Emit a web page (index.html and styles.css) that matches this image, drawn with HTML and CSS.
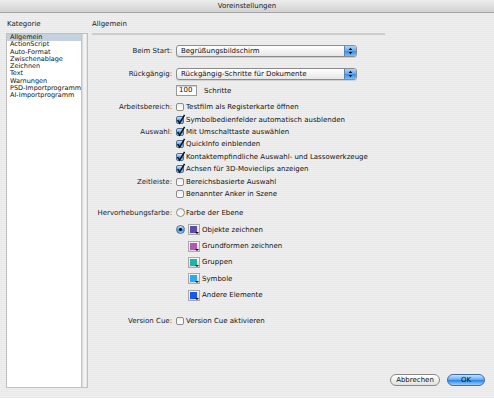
FILE: index.html
```html
<!DOCTYPE html>
<html lang="de">
<head>
  <meta charset="UTF-8">
  <title>Voreinstellungen</title>
  <link rel="stylesheet" href="styles.css">
</head>
<body>
  <div class="window">
    <div class="titlebar">Voreinstellungen</div>

    <div class="main">
      <!-- Kategorien -->
      <div class="sidebar">
        <div class="heading side-heading">Kategorie</div>
        <div class="listbox">
          <ul class="list">
            <li class="selected">Allgemein</li>
            <li>ActionScript</li>
            <li>Auto-Format</li>
            <li>Zwischenablage</li>
            <li>Zeichnen</li>
            <li>Text</li>
            <li>Warnungen</li>
            <li>PSD-Importprogramm</li>
            <li>AI-Importprogramm</li>
          </ul>
          <div class="scrollbar"></div>
        </div>
      </div>

      <!-- Allgemein -->
      <div class="content">
        <div class="heading">Allgemein</div>
        <div class="rule"></div>

        <div class="row popup-row first">
          <span class="label">Beim Start:</span>
          <div class="popup">
            <span class="popup-text">Begrüßungsbildschirm</span>
            <span class="popup-arrows">
              <svg viewBox="0 0 11 12" width="11" height="12"><path d="M5.5 2.8 L7.3 5 L3.7 5 Z M5.5 9.2 L7.3 7 L3.7 7 Z" fill="#111"/></svg>
            </span>
          </div>
        </div>

        <div class="row popup-row second">
          <span class="label">Rückgängig:</span>
          <div class="popup">
            <span class="popup-text">Rückgängig-Schritte für Dokumente</span>
            <span class="popup-arrows">
              <svg viewBox="0 0 11 12" width="11" height="12"><path d="M5.5 2.8 L7.3 5 L3.7 5 Z M5.5 9.2 L7.3 7 L3.7 7 Z" fill="#111"/></svg>
            </span>
          </div>
        </div>

        <div class="row steps-row">
          <span class="label"></span>
          <span class="field">100</span>
          <span class="steps">Schritte</span>
        </div>

        <div class="checks">
          <div class="row">
            <span class="label">Arbeitsbereich:</span>
            <span class="cb"></span>Testfilm als Registerkarte öffnen
          </div>
          <div class="row">
            <span class="label"></span>
            <span class="cb on"><svg viewBox="0 0 9 9"><path d="M1.6 4.2 L3.6 7.2 L8.6 -1.2" fill="none" stroke="#111" stroke-width="1.5"/></svg></span>Symbolbedienfelder automatisch ausblenden
          </div>
          <div class="row">
            <span class="label">Auswahl:</span>
            <span class="cb on"><svg viewBox="0 0 9 9"><path d="M1.6 4.2 L3.6 7.2 L8.6 -1.2" fill="none" stroke="#111" stroke-width="1.5"/></svg></span>Mit Umschalttaste auswählen
          </div>
          <div class="row">
            <span class="label"></span>
            <span class="cb on"><svg viewBox="0 0 9 9"><path d="M1.6 4.2 L3.6 7.2 L8.6 -1.2" fill="none" stroke="#111" stroke-width="1.5"/></svg></span>QuickInfo einblenden
          </div>
          <div class="row">
            <span class="label"></span>
            <span class="cb on"><svg viewBox="0 0 9 9"><path d="M1.6 4.2 L3.6 7.2 L8.6 -1.2" fill="none" stroke="#111" stroke-width="1.5"/></svg></span>Kontaktempfindliche Auswahl- und Lassowerkzeuge
          </div>
          <div class="row">
            <span class="label"></span>
            <span class="cb on"><svg viewBox="0 0 9 9"><path d="M1.6 4.2 L3.6 7.2 L8.6 -1.2" fill="none" stroke="#111" stroke-width="1.5"/></svg></span>Achsen für 3D-Movieclips anzeigen
          </div>
          <div class="row">
            <span class="label">Zeitleiste:</span>
            <span class="cb"></span>Bereichsbasierte Auswahl
          </div>
          <div class="row">
            <span class="label"></span>
            <span class="cb"></span>Benannter Anker in Szene
          </div>
        </div>

        <div class="row highlight-row">
          <span class="label">Hervorhebungsfarbe:</span>
          <span class="rb"></span>Farbe der Ebene
        </div>

        <div class="colours">
          <div class="row colour-row">
            <span class="label"></span>
            <span class="rb on"></span>
            <span class="swatch"><span class="chip purple"></span></span>Objekte zeichnen
          </div>
          <div class="row colour-row indent">
            <span class="label"></span>
            <span class="swatch"><span class="chip pink"></span></span>Grundformen zeichnen
          </div>
          <div class="row colour-row indent">
            <span class="label"></span>
            <span class="swatch"><span class="chip teal"></span></span>Gruppen
          </div>
          <div class="row colour-row indent">
            <span class="label"></span>
            <span class="swatch"><span class="chip sky"></span></span>Symbole
          </div>
          <div class="row colour-row indent">
            <span class="label"></span>
            <span class="swatch"><span class="chip blue"></span></span>Andere Elemente
          </div>
        </div>

        <div class="row cue-row">
          <span class="label">Version Cue:</span>
          <span class="cb"></span>Version Cue aktivieren
        </div>

        <div class="buttons">
          <button class="btn">Abbrechen</button>
          <button class="btn default">OK</button>
        </div>
      </div>
    </div>
  </div>
</body>
</html>
```

FILE: styles.css
```css
body {
  margin: 0;
  font-family: "DejaVu Sans", sans-serif;
  font-size: 7px;
  color: #111;
}

.window {
  width: 494px;
  height: 398px;
  display: flex;
  flex-direction: column;
  background: repeating-linear-gradient(#eeeeee 0 1px, #e9e9e9 1px 2px);
  overflow: hidden;
}

.titlebar {
  height: 12px;
  line-height: 12px;
  text-align: center;
  color: #222;
  background: linear-gradient(#ececec, #d2d2d2);
  border-bottom: 1px solid #a4a4a4;
}

.main {
  flex: 1;
  display: flex;
}

/* sidebar */

.sidebar {
  margin-left: 6px;
  width: 82px;
  display: flex;
  flex-direction: column;
}

.heading {
  height: 18px;
  padding-top: 2px;
  line-height: 18px;
  color: #222;
}

.side-heading {
  padding-left: 1px;
}

.listbox {
  height: 355px;
  box-sizing: border-box;
  display: flex;
  background: #fff;
  border: 1px solid #c0c0c0;
}

.list {
  flex: 1;
  margin: 0;
  padding: 0;
  list-style: none;
}

.list li {
  height: 7.3px;
  line-height: 7.3px;
  padding-left: 3px;
  font-size: 6.5px;
  white-space: nowrap;
}

.list .selected {
  background: #c6d1df;
}

.scrollbar {
  width: 8px;
  background: linear-gradient(90deg, #d4d4d4, #f4f4f4 40%, #f4f4f4 70%, #dcdcdc);
  border-left: 1px solid #c4c4c4;
}

/* content */

.content {
  flex: 1;
  margin-left: 4px;
  padding-right: 9px;
  display: flex;
  flex-direction: column;
}

.rule {
  width: 293px;
  height: 2px;
  background: #cdcdcd;
}

.row {
  display: flex;
  align-items: center;
  height: 12.4px;
  white-space: nowrap;
}

.label {
  flex: none;
  width: 80px;
  margin-right: 4px;
  text-align: right;
  color: #222;
}

.popup-row {
  height: 12px;
}

.popup-row.first {
  margin-top: 10px;
}

.popup-row.second {
  margin-top: 11px;
}

.popup {
  width: 181px;
  height: 12px;
  box-sizing: border-box;
  display: flex;
  align-items: center;
  border: 1px solid #8c8c8c;
  border-radius: 3px;
  background: linear-gradient(#ffffff, #f3f3f3 50%, #e6e6e6);
  box-shadow: 0 1px 0 rgba(0, 0, 0, 0.12);
  overflow: hidden;
}

.popup-text {
  padding-left: 4px;
}

.popup-arrows {
  margin-left: auto;
  width: 11px;
  height: 12px;
  display: flex;
  background: linear-gradient(#b9dcfb, #6cb0f2 45%, #3d8fe6 55%, #8ac6fa);
  border-left: 1px solid #5a86b6;
}

.steps-row {
  height: 11px;
  margin-top: 5px;
}

.field {
  width: 21px;
  height: 11px;
  box-sizing: border-box;
  padding-left: 2px;
  line-height: 9px;
  background: #fff;
  border: 1px solid #9a9a9a;
  box-shadow: inset 0 1px 0 #d0d0d0;
}

.steps {
  margin-left: 7px;
}

.checks {
  margin-top: 5px;
}

.cb {
  position: relative;
  flex: none;
  width: 8px;
  height: 8px;
  box-sizing: border-box;
  margin-right: 2px;
  border: 1px solid #8c8c8c;
  border-radius: 2px;
  background: linear-gradient(#ececec, #ffffff);
}

.cb.on {
  border-color: #4c6f99;
  background: linear-gradient(#d2e8fc, #6cb0f2 45%, #3b8ee6 55%, #a4d2fb);
}

.cb svg {
  position: absolute;
  left: -1px;
  top: -1px;
  width: 9px;
  height: 9px;
  overflow: visible;
}

.highlight-row {
  margin-top: 6.6px;
}

.rb {
  flex: none;
  width: 9px;
  height: 9px;
  box-sizing: border-box;
  margin-right: 1px;
  border: 1px solid #8c8c8c;
  border-radius: 50%;
  background: linear-gradient(#ececec, #ffffff);
}

.rb.on {
  margin-right: 3px;
  border-color: #4c6f99;
  background: radial-gradient(circle, #111 0 1.3px, transparent 1.6px),
    linear-gradient(#d2e8fc, #6cb0f2 45%, #3b8ee6 55%, #a4d2fb);
}

.colours {
  margin-top: 2.6px;
}

.colour-row {
  height: 16.3px;
}

.colour-row.indent .swatch {
  margin-left: 12px;
}

.swatch {
  position: relative;
  flex: none;
  width: 12px;
  height: 11px;
  box-sizing: border-box;
  margin-right: 2px;
  padding: 1px 3px 3px 1px;
  border: 1px solid #a8a8a8;
  background: linear-gradient(#f6f6f6, #dcdcdc);
}

.swatch::after {
  content: "";
  position: absolute;
  right: 0;
  bottom: 0;
  border-left: 2px solid transparent;
  border-right: 2px solid transparent;
  border-top: 2px solid #111;
}

.chip {
  display: block;
  width: 7px;
  height: 7px;
}

.purple { background: #5a4ea9; }
.pink { background: #b357b5; }
.teal { background: #1fb2a9; }
.sky { background: #2aa9f2; }
.blue { background: #1559f0; }

.cue-row {
  margin-top: 11.4px;
}

.buttons {
  margin-top: auto;
  padding-bottom: 12px;
  display: flex;
  justify-content: flex-end;
  gap: 7px;
}

.btn {
  height: 12px;
  padding: 0;
  font-family: "DejaVu Sans", sans-serif;
  font-size: 7px;
  line-height: 10px;
  color: #111;
  border: 1px solid #8a8a8a;
  border-radius: 6px;
  background: linear-gradient(#ffffff, #f0f0f0 50%, #e2e2e2);
  width: 50px;
}

.btn.default {
  width: 38px;
  border-color: #3f6ea8;
  background: linear-gradient(#c8e3fc, #6aaef2 45%, #2f86e6 55%, #9ad0fb);
}
```
